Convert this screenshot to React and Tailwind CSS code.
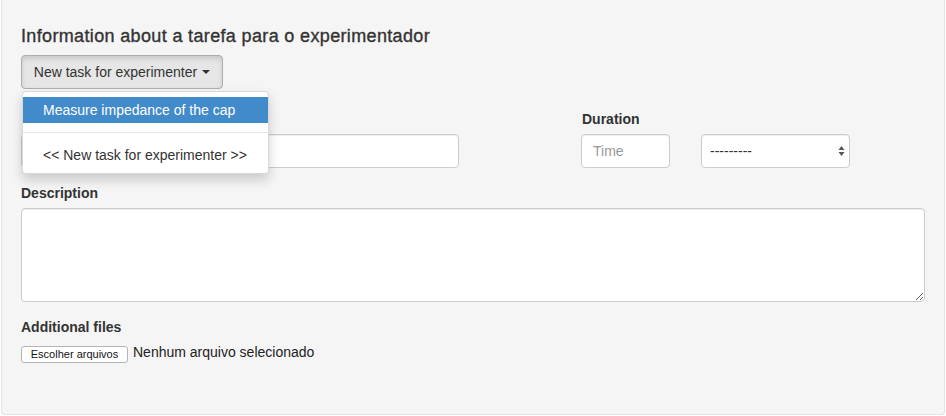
import React from "react";

export default function App() {
  const font = { fontFamily: '"Liberation Sans", Arial, sans-serif' };
  return (
    <div className="w-[946px] h-[416px] bg-white pl-px overflow-hidden text-[#333]" style={font}>
      <div className="relative w-[944px] h-[415px] bg-[#f5f5f5] border border-t-0 border-[#e3e3e3] rounded-b-[4px] px-[19px] pt-[26px]">
        <h4 className="text-[18px] leading-[20px] font-medium m-0 tracking-[0.35px] [-webkit-text-stroke:0.35px_#333] whitespace-nowrap">Information about a tarefa para o experimentador</h4>

        <div className="relative mt-[9px]">
          <button className="h-[34px] w-[202px] px-[12px] text-[14px] leading-[20px] bg-[#e6e6e6] border border-[#adadad] rounded-[4px] shadow-[inset_0_3px_5px_rgba(0,0,0,0.125)] flex items-center justify-center text-[#333] whitespace-nowrap">
            New task for experimenter
            <span className="ml-[5px] inline-block w-0 h-0 border-t-[4px] border-t-[#333] border-x-[4px] border-x-transparent"></span>
          </button>
          <div className="absolute z-10 left-px top-[36px] w-[247px] bg-white border border-[rgba(0,0,0,0.15)] rounded-[4px] shadow-[0_6px_12px_rgba(0,0,0,0.175)] py-[5px]">
            <div className="px-[20px] py-[3px] text-[14px] leading-[20px] bg-[#428bca] text-white whitespace-nowrap">Measure impedance of the cap</div>
            <div className="h-px bg-[#e5e5e5] my-[9px]"></div>
            <div className="px-[20px] py-[3px] text-[14px] leading-[20px] text-[#333] whitespace-nowrap">&lt;&lt; New task for experimenter &gt;&gt;</div>
          </div>
        </div>

        <div className="flex mt-[20px]">
          <div className="w-[438px]">
            <div className="h-[20px] mb-[5px]"></div>
            <div className="h-[34px] bg-white border border-[#ccc] rounded-[4px] shadow-[inset_0_1px_1px_rgba(0,0,0,0.075)]"></div>
          </div>
          <div className="ml-[122px]">
            <div className="text-[14px] leading-[20px] font-bold mb-[5px] pl-px">Duration</div>
            <div className="flex gap-[31px]">
              <div className="w-[89px] h-[34px] bg-white border border-[#ccc] rounded-[4px] shadow-[inset_0_1px_1px_rgba(0,0,0,0.075)] px-[11px] flex items-center text-[14px] text-[#999]">Time</div>
              <div className="w-[149px] h-[34px] bg-white border border-[#ccc] rounded-[4px] shadow-[inset_0_1px_1px_rgba(0,0,0,0.075)] pl-[8px] pr-[4px] flex items-center justify-between text-[14px] text-[#333]">
                <span>---------</span>
                <svg width="7" height="12" viewBox="0 0 7 12">
                  <path d="M3.5 1 L6.5 5 H0.5 Z" fill="#555" />
                  <path d="M3.5 11 L6.5 7 H0.5 Z" fill="#555" />
                </svg>
              </div>
            </div>
          </div>
        </div>

        <div className="mt-[15px]">
          <div className="text-[14px] leading-[20px] font-bold mb-[5px]">Description</div>
          <textarea className="block w-[904px] h-[94px] bg-white border border-[#ccc] rounded-[4px] shadow-[inset_0_1px_1px_rgba(0,0,0,0.075)] resize-y outline-none"></textarea>
        </div>

        <div className="mt-[15px]">
          <div className="text-[14px] leading-[20px] font-bold mb-[5px]">Additional files</div>
          <div className="flex items-center h-[20px]">
            <div className="mt-[4px] h-[17px] w-[107px] bg-white border border-[#b5b5b5] rounded-[3px] flex items-center justify-center text-[11px] text-[#111] whitespace-nowrap">Escolher arquivos</div>
            <span className="ml-[5px] text-[14px] leading-[20px] text-[#222] whitespace-nowrap">Nenhum arquivo selecionado</span>
          </div>
        </div>
      </div>
    </div>
  );
}
